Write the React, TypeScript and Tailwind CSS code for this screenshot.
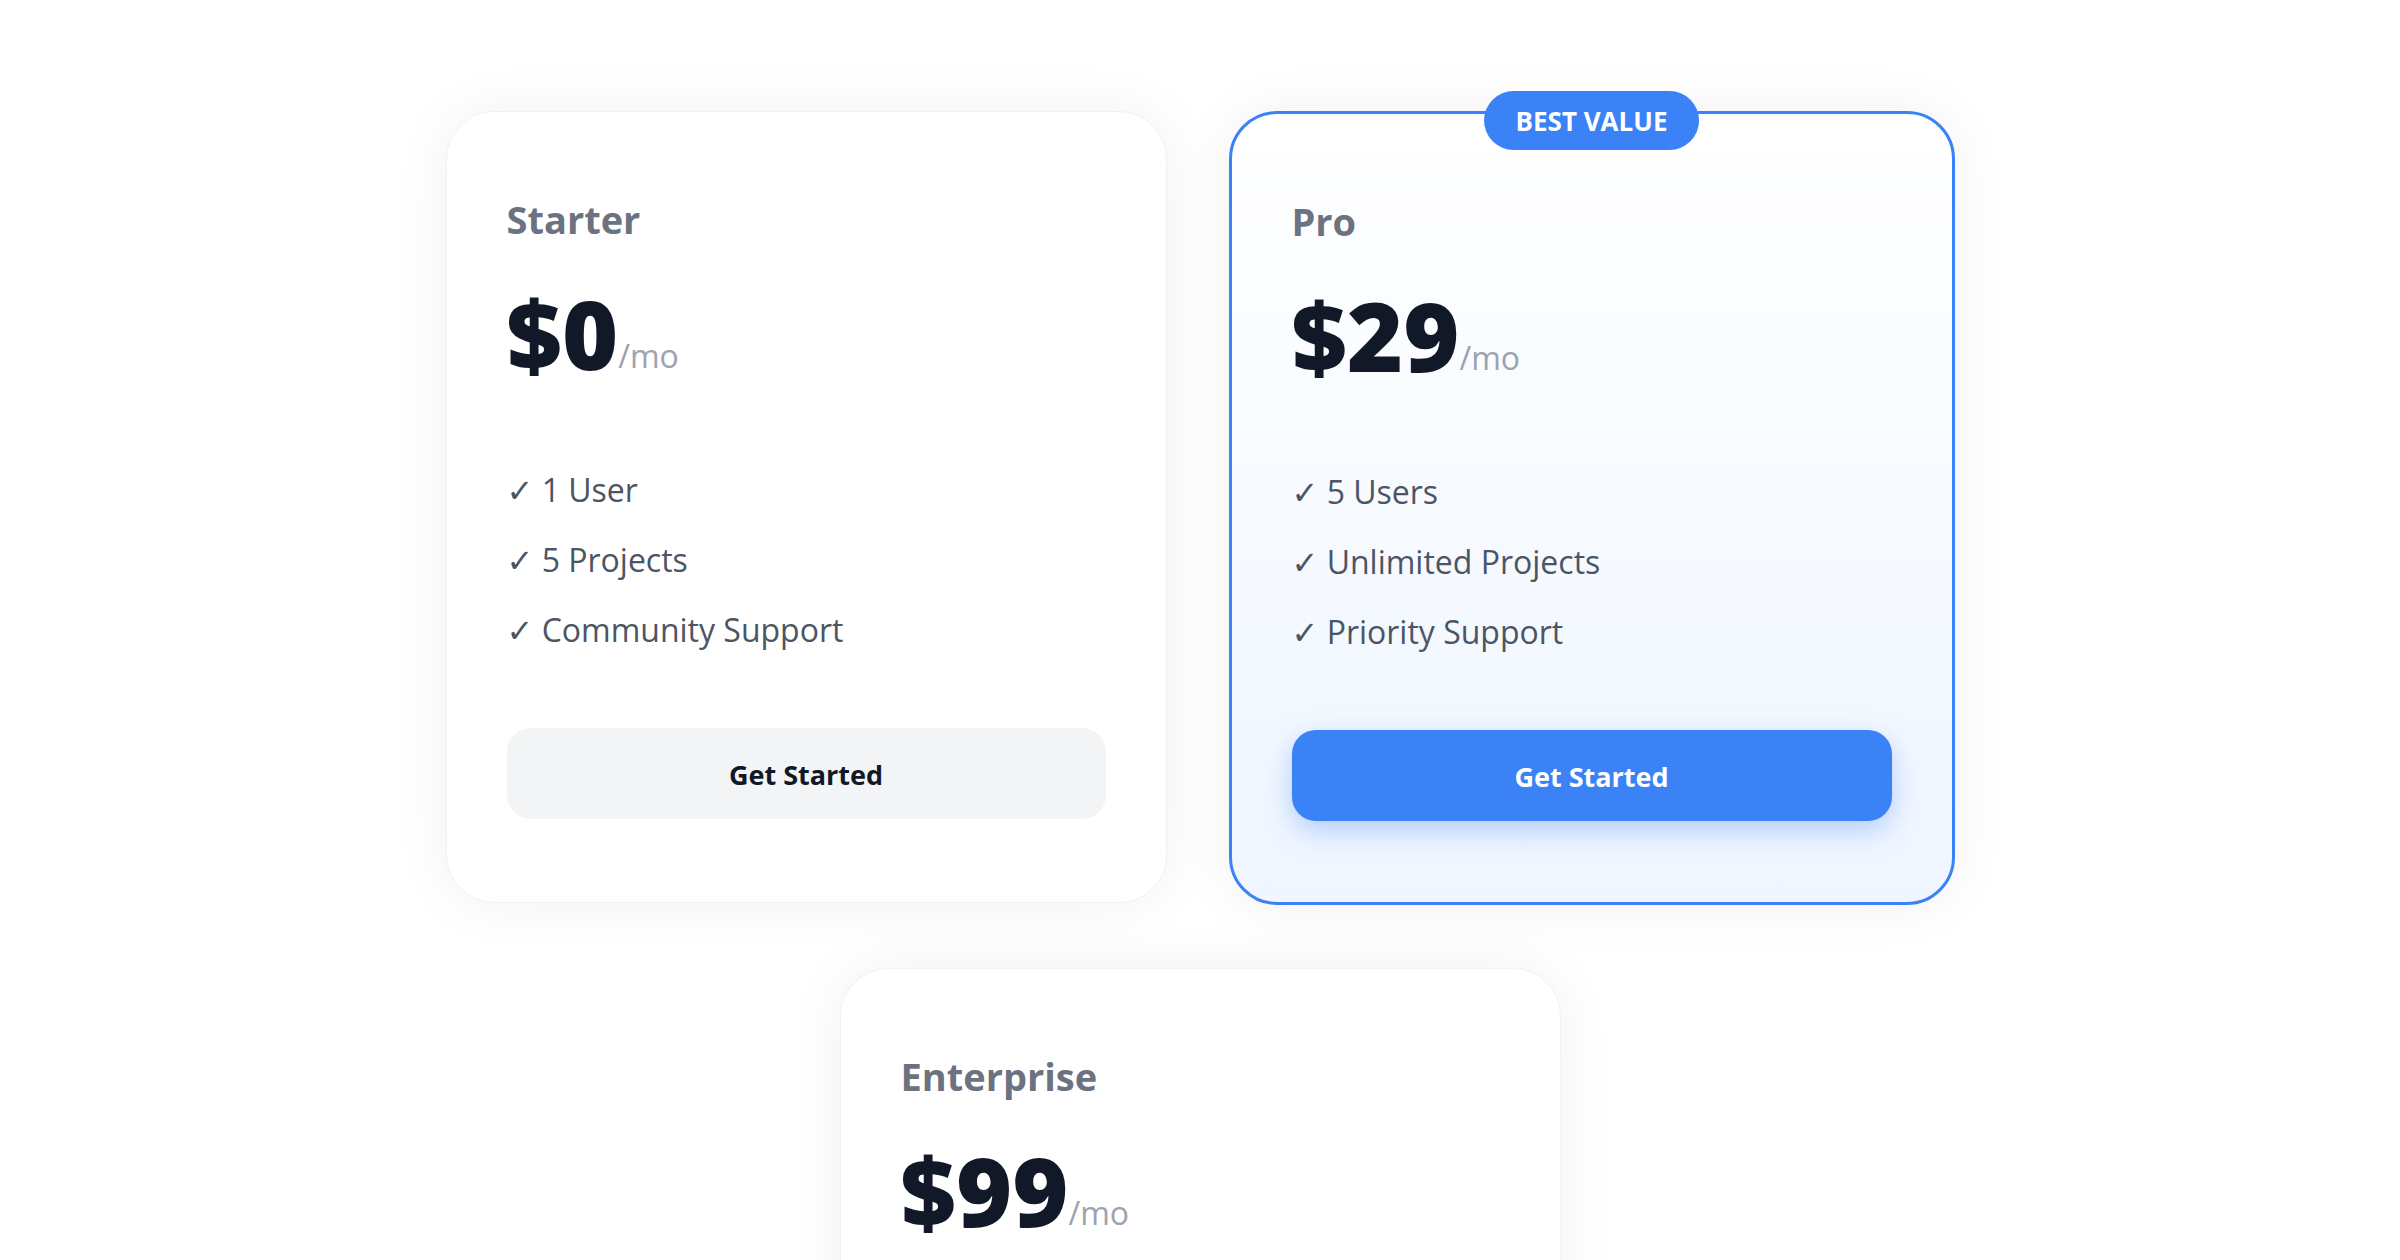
import React from "react";

type Plan = {
  name: string;
  price: string;
  features: string[];
  featured?: boolean;
};

const plans: Plan[] = [
  { name: "Starter", price: "$0", features: ["1 User", "5 Projects", "Community Support"] },
  { name: "Pro", price: "$29", features: ["5 Users", "Unlimited Projects", "Priority Support"], featured: true },
  { name: "Enterprise", price: "$99", features: ["Unlimited Users", "Unlimited Projects", "Dedicated Support"] },
];

function Card({ plan }: { plan: Plan }) {
  const featured = plan.featured;
  return (
    <div
      className={
        featured
          ? "relative w-[726px] rounded-[48px] border-[3px] border-[#3b82f6] bg-gradient-to-b from-white to-[#eff6ff] px-[60px] pt-[88px] pb-[81px] shadow-[0_0_60px_rgba(0,0,0,0.06)]"
          : "relative w-[721px] rounded-[48px] border border-[#f1f1f1] bg-white px-[60px] pt-[88px] pb-[83px] shadow-[0_0_60px_rgba(0,0,0,0.06)]"
      }
    >
      {featured && (
        <div className="absolute left-1/2 top-[-23px] -translate-x-1/2 rounded-full bg-[#3b82f6] px-[32px] h-[59px] flex items-center text-[26px] font-bold text-white leading-none whitespace-nowrap">
          BEST VALUE
        </div>
      )}
      <div className="text-[38px] leading-[38px] font-bold text-[#6b7280]">{plan.name}</div>
      <div className="mt-[47px] flex items-baseline">
        <span className="text-[96px] leading-[96px] font-extrabold text-[#111827]">{plan.price}</span>
        <span className="relative -top-[2px] text-[32px] leading-[36px] text-[#9ca3af]">/mo</span>
      </div>
      <ul className="mt-[86px] flex flex-col gap-[24px]">
        {plan.features.map((f) => (
          <li key={f} className="text-[32px] leading-[46px] text-[#4b5563]">
            ✓ {f}
          </li>
        ))}
      </ul>
      <button
        className={
          featured
            ? "mt-[75px] h-[91px] w-full rounded-[24px] bg-[#3b82f6] pt-[3px] text-[27px] font-bold text-white shadow-[0_10px_28px_rgba(59,130,246,0.35)]"
            : "mt-[75px] h-[91px] w-full rounded-[24px] bg-[#f3f4f6] pt-[3px] text-[27px] font-bold text-[#111827]"
        }
      >
        Get Started
      </button>
    </div>
  );
}

export default function App() {
  return (
    <div
      className="min-h-screen bg-white pt-[111px] pb-[80px]"
      style={{ fontFamily: '"Open Sans", "DejaVu Sans", sans-serif' }}
    >
      <div className="mx-auto flex max-w-[1510px] flex-wrap items-start justify-center gap-x-[62px] gap-y-[63px]">
        {plans.map((p) => (
          <Card key={p.name} plan={p} />
        ))}
      </div>
    </div>
  );
}
